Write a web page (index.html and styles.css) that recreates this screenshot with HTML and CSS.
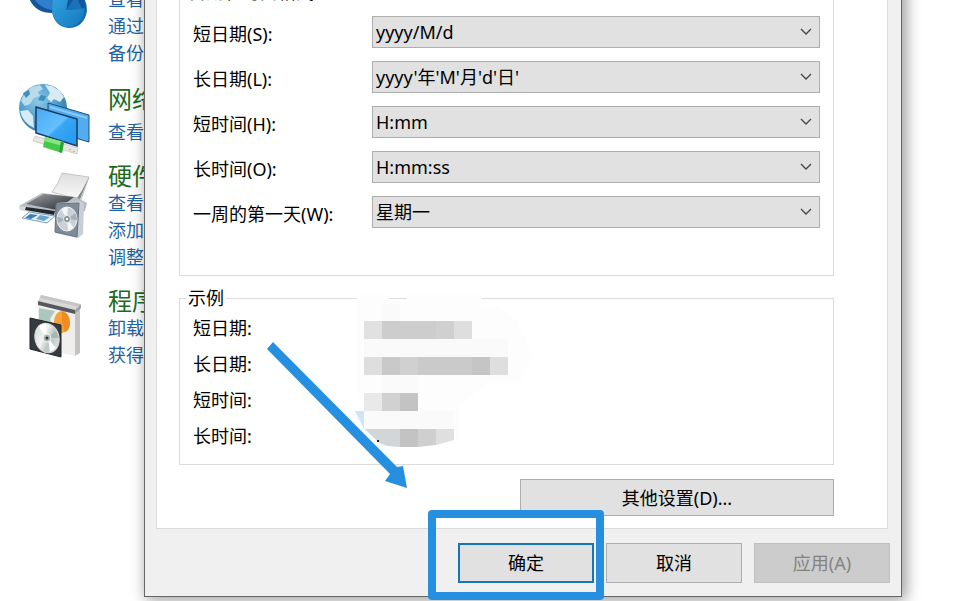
FILE: index.html
```html
<!DOCTYPE html>
<html lang="zh-CN">
<head>
  <meta charset="UTF-8">
  <title>区域</title>
  <link rel="stylesheet" href="styles.css">
</head>
<body>
  <div class="desktop">
    <nav class="panel">
      <section class="category">
        <svg class="icon icon-first" viewBox="0 0 72 43">
          <defs>
            <linearGradient id="pie" x1="0" y1="0" x2="1" y2="1">
              <stop offset="0" stop-color="#35a5e3"/><stop offset="1" stop-color="#1478bd"/>
            </linearGradient>
          </defs>
          <path d="M11 8 L37 4 L34 27 Q17 27 11 12 Z" fill="#1553a0"/>
          <path d="M13 8 L37 4 L34 24 Q20 22 13 8 Z" fill="#2f80cb"/>
          <path d="M34 25 Q36 4 55 5 Q69 8 69 25 Q66 42 50 42 Q36 40 34 25 Z" fill="#126bac"/>
          <ellipse cx="50" cy="23" rx="16" ry="18" fill="url(#pie)"/>
          <path d="M48 24 L52 4 Q66 6 68 22 Z" fill="#1256a0"/>
          <path d="M48 24 L58 10 L64 23 Z" fill="#1a73b6"/>
        </svg>
        <div class="links">
          <a href="#">查看</a>
          <a href="#">通过</a>
          <a href="#">备份</a>
        </div>
      </section>

      <section class="category network">
        <svg class="icon" viewBox="0 0 72 72">
          <defs>
            <radialGradient id="globe" cx=".4" cy=".35" r=".65">
              <stop offset="0" stop-color="#8fc9e8"/><stop offset=".6" stop-color="#4f9fcf"/><stop offset="1" stop-color="#3478a8"/>
            </radialGradient>
            <linearGradient id="screen" x1="0" y1="0" x2="1" y2="1">
              <stop offset="0" stop-color="#4ba8f2"/><stop offset=".5" stop-color="#64c0ff"/><stop offset=".55" stop-color="#3aa5f5"/><stop offset="1" stop-color="#2398ee"/>
            </linearGradient>
          </defs>
          <circle cx="25" cy="25" r="24" fill="url(#globe)"/>
          <path d="M14 4 L22 2 L25 6 L20 9 L22 13 L16 15 L12 21 L7 23 L3 18 Q6 9 14 4 Z" fill="#b9dbea"/>
          <path d="M27 2 L34 3 L42 8 L46 14 L42 19 L36 16 L33 19 L29 15 L32 10 Z" fill="#d8ebf4"/>
          <path d="M2 28 L10 27 L15 33 L16 45 Q5 40 2 28 Z" fill="#d8ebf4"/>
          <path d="M5 10 L11 7 L12 11 L8 15 Z M23 12 L28 13 L26 18 L20 17 Z" fill="#3e8dbb"/>
          <path d="M30 20 L71 32 L71 59 L30 47 Z" fill="#51adf0" stroke="#224e77"/>
          <path d="M32 23 L69 34 L69 36 L32 25 Z" fill="#8ccdf8"/>
          <path d="M18 24 L59 36 L59 63 L18 50 Z" fill="url(#screen)" stroke="#173c61" stroke-width="1.5"/>
          <path d="M17 53 L60 65 L59 71 L15 58 Z" fill="#e9e5e1" stroke="#cbbfc0" stroke-width=".7"/>
          <path d="M27 54 L46 59 L44 70 L25 64 Z" fill="#43c94a"/>
          <path d="M27 54 L46 59 L45 63 L26 58 Z" fill="#87e57b"/>
          <path d="M46 59 L44 70 L41 69 L43 58 Z" fill="#2aa23b"/>
          <path d="M51 66 L53 67 M55 69 L57 68" stroke="#b9a3a3"/>
        </svg>
        <div class="links">
          <h2>网络</h2>
          <a href="#">查看</a>
        </div>
      </section>

      <section class="category hardware">
        <svg class="icon" viewBox="0 0 72 72">
          <defs>
            <linearGradient id="printer" x1="0" y1="0" x2="1" y2="1">
              <stop offset="0" stop-color="#a0a3a6"/><stop offset=".5" stop-color="#606469"/><stop offset="1" stop-color="#292d31"/>
            </linearGradient>
            <linearGradient id="paper" x1="0" y1="0" x2="0" y2="1">
              <stop offset="0" stop-color="#dedede"/><stop offset="1" stop-color="#fafafa"/>
            </linearGradient>
          </defs>
          <path d="M44 5 L71 9 L63 32 L34 24 Q40 17 44 5 Z" fill="url(#paper)" stroke="#c6c6c6"/>
          <path d="M71 9 L61 34 L57 33 Q65 22 71 9 Z" fill="#858b91"/>
          <path d="M1 38 L24 25 L58 29 L69 35 L67 43 L51 48 L2 42 Z" fill="#b9bdc2"/>
          <path d="M8 36 L26 26 L56 29 L39 42 Z" fill="url(#printer)"/>
          <path d="M1 38 L39 44 L51 36 L51 51 L37 49 L2 42 Z" fill="#d6d8db"/>
          <path d="M8 39 L37 43 L36 47 L7 42 Z" fill="#23282d"/>
          <path d="M11 44 L37 48 L29 55 L4 50 Z" fill="#e8f3fc" stroke="#82a1bb"/>
          <path d="M12 46 L20 47 L13 51 L7 50 Z" fill="#3d80b6"/>
          <path d="M22 47 L32 49 L26 53 L18 51 Z" fill="#69a6cf"/>
          <path d="M39 35 L63 33 L66 36 L65 66 L60 70 L37 65 Z" fill="#c8ced5"/>
          <path d="M38 36 L61 35 L59 69 L37 64 Z" fill="#7f8c98" stroke="#66727d"/>
          <ellipse cx="49" cy="51" rx="10" ry="12" fill="#c9d0d6" stroke="#eef0f2"/>
          <path d="M49 51 L43 41 L50 39 Z M49 51 L56 60 L50 63 Z" fill="#f4f6f7"/>
          <path d="M49 51 L58 45 L59 52 Z M49 51 L40 55 L39 49 Z" fill="#a7b1ba"/>
          <circle cx="49" cy="51" r="3.5" fill="#7d8993" stroke="#edf0f2"/>
          <circle cx="49" cy="51" r="1.3" fill="#fff"/>
        </svg>
        <div class="links">
          <h2>硬件</h2>
          <a href="#">查看</a>
          <a href="#">添加</a>
          <a href="#">调整</a>
        </div>
      </section>

      <section class="category">
        <svg class="icon" viewBox="0 0 72 72">
          <defs>
            <linearGradient id="disc" x1="0" y1="0" x2="1" y2="1">
              <stop offset="0" stop-color="#c7dad5"/><stop offset=".4" stop-color="#f2f3f2"/><stop offset=".6" stop-color="#bcc6c3"/><stop offset="1" stop-color="#e9eeea"/>
            </linearGradient>
          </defs>
          <path d="M20 16 L57 24 L57 69 L20 61 Z" fill="#f0efed"/>
          <path d="M57 24 L62 21 L62 66 L57 69 Z" fill="#c4c3c3"/>
          <path d="M21 21 L37 24 L32 32 L36 42 L21 41 Z" fill="#acc8bd"/>
          <ellipse cx="44" cy="35" rx="8" ry="11" fill="#f6a23a"/>
          <path d="M44 24 Q51 27 52 36 Q52 43 47 45 L44 35 Z" fill="#ee8c20"/>
          <path d="M20 14 L23 8 L62 17 L58 24 Z" fill="#d8d8d8"/>
          <path d="M23 8 L62 17 L62 20 L22 11 Z" fill="#c6c6c6"/>
          <path d="M20 14 L57 23 L57 27 L20 18 Z" fill="#55595b"/>
          <path d="M57 23 L63 17 L63 21 L57 27 Z" fill="#a1a3a4"/>
          <path d="M12 31 L43 38 L43 70 L12 62 Z" fill="#363b3f" stroke="#20252a"/>
          <ellipse cx="29" cy="51" rx="12" ry="15" transform="rotate(-14 29 51)" fill="url(#disc)" stroke="#d7dcda"/>
          <path d="M29 51 L20 39 L28 36 Z M30 51 L38 61 L32 65 Z" fill="#fff"/>
          <path d="M29 51 L38 44 L41 51 Z" fill="#a8b8b4"/>
          <circle cx="29" cy="51" r="4" fill="#aab5b2" stroke="#f3f3f3"/>
          <circle cx="29" cy="51" r="1.5" fill="#30363a"/>
        </svg>
        <div class="links">
          <h2>程序</h2>
          <a href="#">卸载</a>
          <a href="#">获得</a>
        </div>
      </section>
    </nav>

    <main class="dialog">
      <form class="tab-page">
        <fieldset class="formats">
          <legend>日期和时间格式</legend>
          <div class="row">
            <label for="shortDate">短日期(S):</label>
            <div class="picker">
              <select id="shortDate"><option>yyyy/M/d</option></select>
              <svg viewBox="0 0 12 8"><path d="M1 1 L6 6 L11 1"/></svg>
            </div>
          </div>
          <div class="row">
            <label for="longDate">长日期(L):</label>
            <div class="picker">
              <select id="longDate"><option>yyyy'年'M'月'd'日'</option></select>
              <svg viewBox="0 0 12 8"><path d="M1 1 L6 6 L11 1"/></svg>
            </div>
          </div>
          <div class="row">
            <label for="shortTime">短时间(H):</label>
            <div class="picker">
              <select id="shortTime"><option>H:mm</option></select>
              <svg viewBox="0 0 12 8"><path d="M1 1 L6 6 L11 1"/></svg>
            </div>
          </div>
          <div class="row">
            <label for="longTime">长时间(O):</label>
            <div class="picker">
              <select id="longTime"><option>H:mm:ss</option></select>
              <svg viewBox="0 0 12 8"><path d="M1 1 L6 6 L11 1"/></svg>
            </div>
          </div>
          <div class="row">
            <label for="firstDay">一周的第一天(W):</label>
            <div class="picker">
              <select id="firstDay"><option>星期一</option></select>
              <svg viewBox="0 0 12 8"><path d="M1 1 L6 6 L11 1"/></svg>
            </div>
          </div>
        </fieldset>

        <div class="example">
          <fieldset>
            <legend>示例</legend>
            <p>短日期:</p>
            <p>长日期:</p>
            <p>短时间:</p>
            <p>长时间:</p>
          </fieldset>
          <!-- pixelated sample values -->
          <svg class="mosaic" viewBox="0 0 185 160">
            <path d="M8 0 H40 V5 H58 V0 H132 V12 H150 L168 26 L184 60 L170 88 H140 L110 110 V145 L90 150 H40 L15 130 L8 90 Z" fill="#fdfdfd"/>
            <path d="M15 44 H159 V62 H15 Z M33 8 H51 V26 H33 Z M33 80 H69 V98 H33 Z M15 116 H105 V134 H15 Z" fill="#fafafa"/>
            <path d="M6 116 H15 V134 Z M15 134 H33 V150 Z" fill="#cfe4f5"/>
            <g shape-rendering="crispEdges">
              <path d="M15 26 H33 V44 H15 Z" fill="#e1e1e1"/>
              <path d="M33 26 H105 V44 H33 Z" fill="#cdcdcd"/>
              <path d="M87 26 H105 V44 H87 Z" fill="#d0d0d0"/>
              <path d="M105 26 H123 V44 H105 Z" fill="#dedede"/>
              <path d="M15 62 H33 V80 H15 Z" fill="#dedede"/>
              <path d="M33 62 H51 V80 H33 Z" fill="#c9c9c9"/>
              <path d="M51 62 H69 V80 H51 Z" fill="#d0d0d0"/>
              <path d="M69 62 H123 V80 H69 Z" fill="#cacaca"/>
              <path d="M123 62 H141 V80 H123 Z" fill="#c5c5c5"/>
              <path d="M141 62 H159 V80 H141 Z" fill="#dedede"/>
              <path d="M15 98 H33 V116 H15 Z" fill="#e9e9e9"/>
              <path d="M33 98 H51 V116 H33 Z" fill="#d1d1d1"/>
              <path d="M51 98 H69 V116 H51 Z" fill="#c3c3c3"/>
            </g>
            <path d="M17 134 H51 V152 L38 151 Q28 148 17 134 Z" fill="#d2d6d8"/>
            <path d="M51 134 H69 V152 H51 Z" fill="#c3c3c3"/>
            <path d="M69 134 H87 V150 L69 152 Z" fill="#cfcfcf"/>
            <path d="M87 134 H105 V145 L87 150 Z" fill="#dfdfdf"/>
            <path d="M28 145 H30 V147 H28 Z" fill="#222"/>
          </svg>
          <svg class="arrow" viewBox="0 0 150 155">
            <path d="M8 2 L132 127 L138 126 L142 148 L120 141 L125 134 L2 9 Z"/>
          </svg>
        </div>

        <button type="button" class="more">其他设置(D)...</button>
      </form>

      <footer class="actions">
        <div class="highlight"><button type="button" class="primary">确定</button></div>
        <button type="button">取消</button>
        <button type="button" disabled>应用(A)</button>
      </footer>
    </main>
  </div>
</body>
</html>
```
FILE: styles.css
```css
*,
*::after {
  box-sizing: border-box;
}

body {
  display: flow-root;
  min-height: 100vh;
  margin: 0;
  background: #fff;
  color: #000;
  font-family: "Noto Sans", "Noto Sans CJK SC", sans-serif;
  font-size: 18px;
}

.desktop {
  display: flex;
  align-items: flex-start;
  margin-top: -19px;
}

.panel {
  flex: 0 0 144px;
  width: 144px;
  display: flex;
  flex-direction: column;
  gap: 16px;
  padding-top: 5px;
  overflow: hidden;
}

.category {
  display: flex;
  gap: 18px;
  padding-left: 18px;
}

.icon {
  flex: none;
  width: 72px;
  height: 72px;
  margin-bottom: -12px;
}

.icon-first {
  height: 43px;
}

.hardware .icon {
  margin-top: 6px;
}

.links {
  display: flex;
  flex-direction: column;
  white-space: nowrap;
}

.links h2 {
  margin: 0;
  color: #1d6b22;
  font-size: 24px;
  font-weight: 400;
  line-height: 28px;
}

.network h2 {
  margin-bottom: 4px;
  line-height: 32px;
}

.links a {
  color: #1f639f;
  line-height: 27px;
  text-decoration: none;
}

.dialog {
  flex: 1;
  min-width: 0;
  margin-right: 53px;
  padding: 0 13px 13px 11px;
  background: #f0f0f0;
  border: 1px solid #666;
  border-top: none;
  box-shadow: 3px 2px 14px 1px rgba(0, 0, 0, 0.4);
}

.tab-page {
  display: flex;
  flex-direction: column;
  padding: 0 53px 12px 22px;
  background: #fff;
  border: 1px solid #dcdcdc;
  border-top: none;
}

fieldset {
  min-width: 0;
  margin: 0;
  padding: 0 13px 10px 13px;
  border: 1px solid #dcdcdc;
}

legend {
  margin-left: -7px;
  padding: 0 2px;
}

.formats {
  padding-bottom: 47px;
}

.formats legend {
  margin-bottom: 13px;
  line-height: 22px;
}

.row {
  display: flex;
  align-items: center;
  margin-bottom: 13px;
}

.row:last-child {
  margin-bottom: 0;
}

.row label {
  flex: 0 0 179px;
  padding-top: 4px;
  line-height: 28px;
}

.picker {
  flex: 1;
  display: grid;
  align-items: center;
}

.picker select,
.picker svg {
  grid-area: 1 / 1;
}

.picker svg {
  justify-self: end;
  width: 12px;
  height: 8px;
  margin-right: 8px;
  fill: none;
  stroke: #444;
  stroke-width: 1.3;
  pointer-events: none;
}

select {
  width: 100%;
  height: 32px;
  padding: 0 24px 0 3px;
  appearance: none;
  background: #e1e1e1;
  border: 1px solid #adadad;
  border-radius: 0;
  color: #000;
  font: inherit;
}

.example {
  position: relative;
  margin-top: 11px;
}

.example legend {
  line-height: 23px;
}

.example p {
  margin: 0;
  line-height: 36px;
}

.mosaic {
  position: absolute;
  left: 170px;
  top: 8px;
  width: 185px;
  height: 160px;
}

.arrow {
  position: absolute;
  left: 86px;
  top: 53px;
  width: 150px;
  height: 155px;
  fill: #268fe0;
}

button {
  width: 136px;
  height: 40px;
  padding: 0 0 2px;
  background: #e1e1e1;
  border: 1px solid #adadad;
  color: #000;
  font: inherit;
}

button:disabled {
  background: #ccc;
  border-color: #bfbfbf;
  color: #838383;
}

.more {
  align-self: flex-end;
  width: 314px;
  height: 37px;
  margin-top: 14px;
}

.actions {
  display: flex;
  justify-content: flex-end;
  gap: 12px;
  margin-right: -2px;
  padding-top: 14px;
}

.primary {
  border: 2px solid #1675b5;
}

.highlight {
  position: relative;
}

.highlight::after {
  content: "";
  position: absolute;
  left: -30px;
  top: -33px;
  width: 176px;
  height: 90px;
  border: 8px solid #268fe0;
  border-radius: 4px;
  pointer-events: none;
}
```
